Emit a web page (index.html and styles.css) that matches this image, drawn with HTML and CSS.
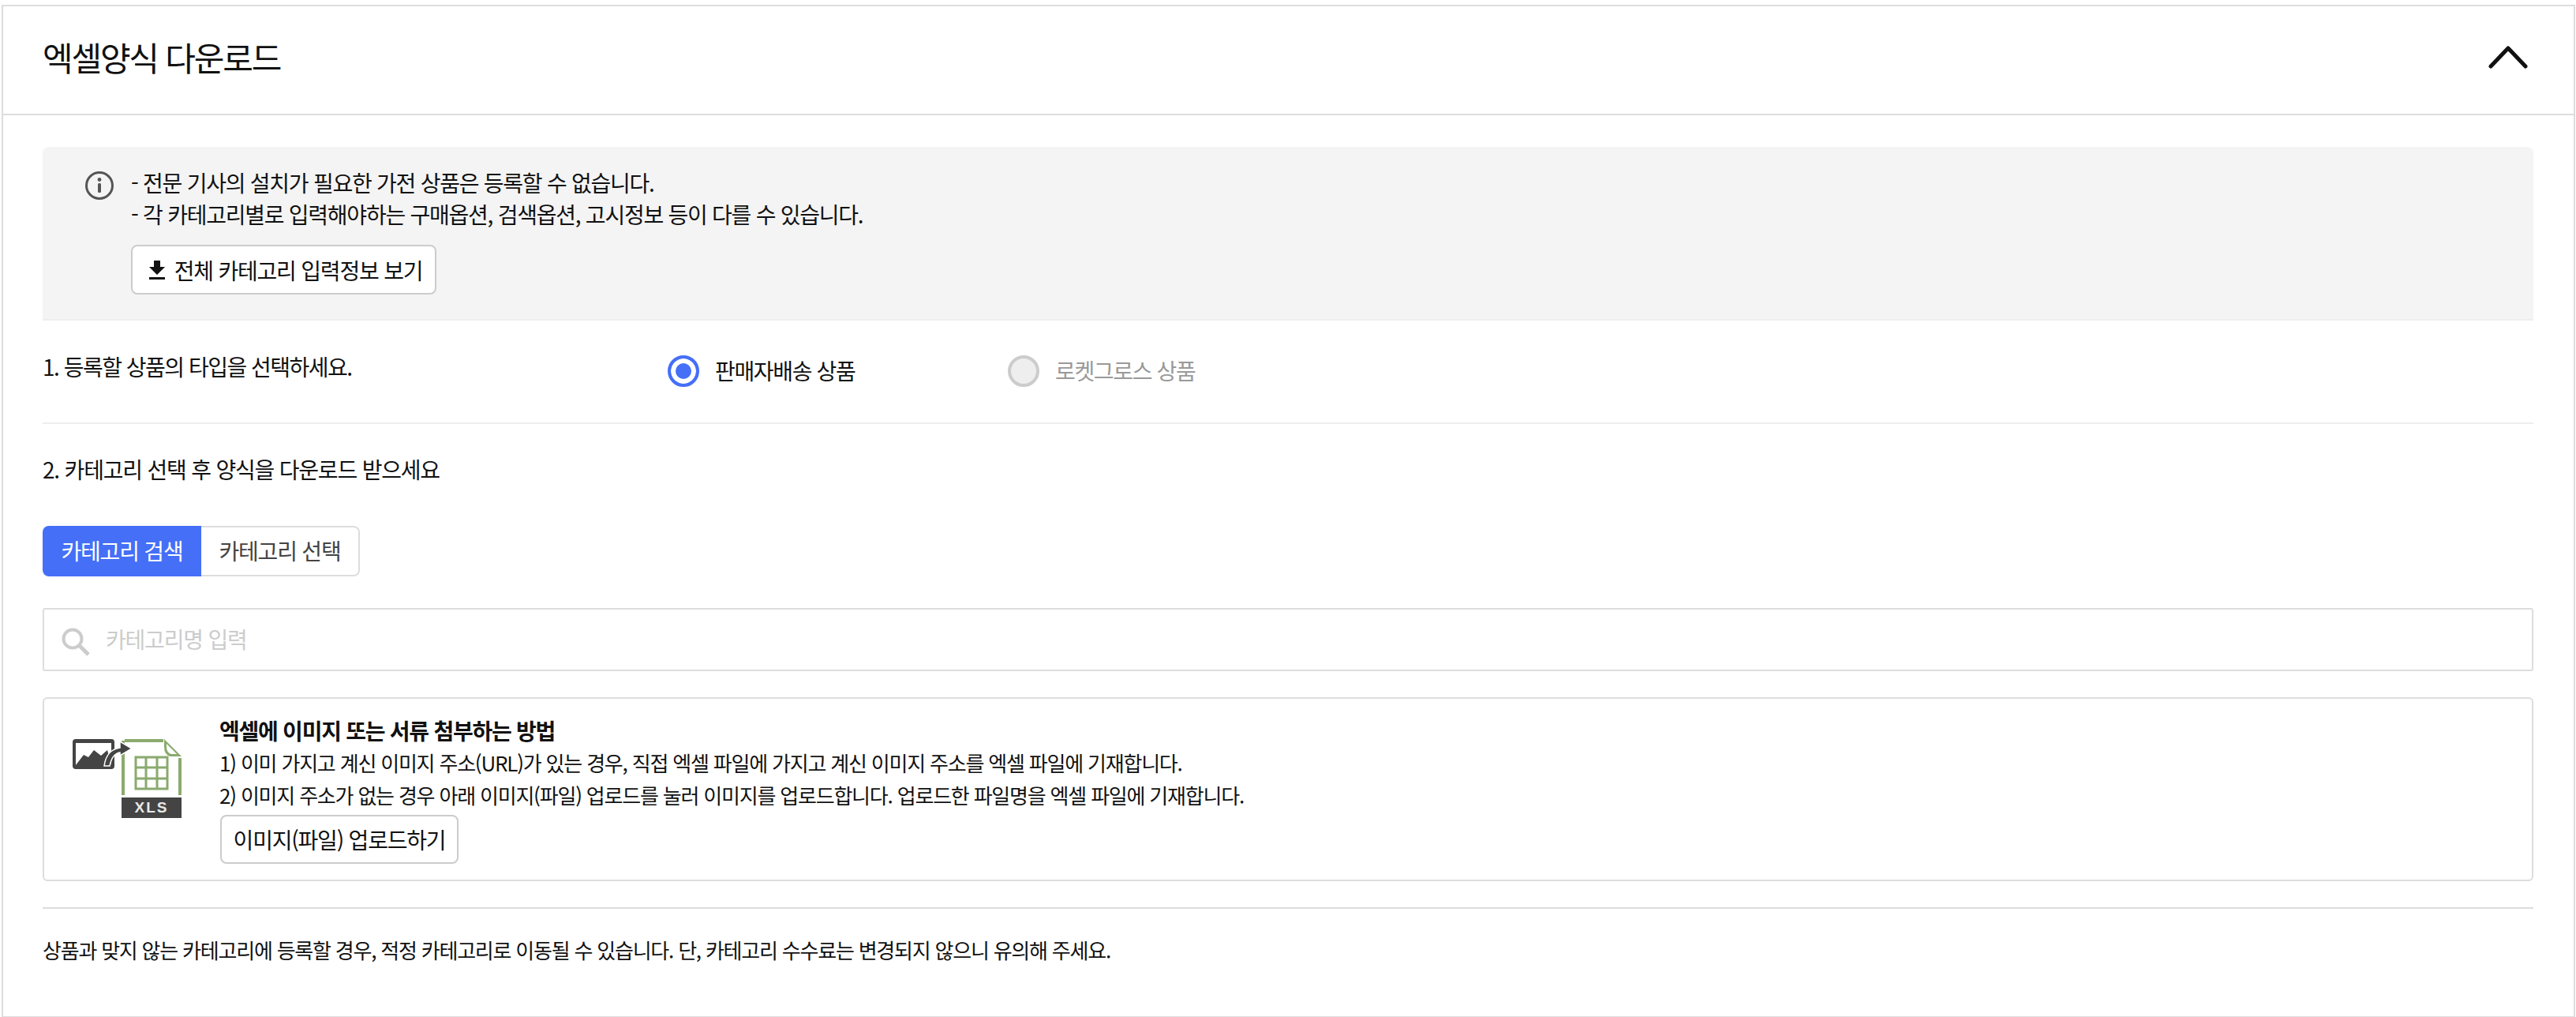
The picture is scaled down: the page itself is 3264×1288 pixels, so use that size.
FILE: index.html
```html
<!DOCTYPE html>
<html lang="ko">
<head>
  <meta charset="UTF-8">
  <title>엑셀양식 다운로드</title>
  <link rel="stylesheet" href="styles.css">
</head>
<body>

  <section class="panel">
    <header class="panel-header">
      <h1>엑셀양식 다운로드</h1>
      <svg class="chevron" width="50" height="30" viewBox="0 0 50 30">
        <path d="M3 27 L25 4 L47 27" fill="none" stroke="#111" stroke-width="5" stroke-linecap="round" stroke-linejoin="round"/>
      </svg>
    </header>

    <div class="panel-body">
      <!-- Notice -->
      <div class="notice">
        <svg class="info-icon" width="36" height="36" viewBox="0 0 36 36">
          <circle cx="18" cy="18" r="16.5" fill="none" stroke="#555" stroke-width="3"/>
          <circle cx="18" cy="10.5" r="2.4" fill="#555"/>
          <rect x="16" y="15" width="4" height="12" rx="1.5" fill="#555"/>
        </svg>
        <div class="notice-text">
          <p>- 전문 기사의 설치가 필요한 가전 상품은 등록할 수 없습니다.</p>
          <p>- 각 카테고리별로 입력해야하는 구매옵션, 검색옵션, 고시정보 등이 다를 수 있습니다.</p>
          <button type="button" class="btn btn-download">
            <svg width="20" height="24" viewBox="0 0 20 24">
              <path d="M6 0 H14 V8 H20 L10 18 L0 8 H6 Z" fill="#111"/>
              <rect x="0" y="21" width="20" height="3" fill="#111"/>
            </svg>
            전체 카테고리 입력정보 보기
          </button>
        </div>
      </div>

      <!-- Step 1 -->
      <div class="type-row">
        <p class="type-label">1. 등록할 상품의 타입을 선택하세요.</p>
        <label class="radio-option">
          <span class="radio radio-on"></span>
          <span class="radio-text">판매자배송 상품</span>
        </label>
        <label class="radio-option radio-option-off">
          <span class="radio radio-off"></span>
          <span class="radio-text">로켓그로스 상품</span>
        </label>
      </div>

      <!-- Step 2 -->
      <p class="step-title">2. 카테고리 선택 후 양식을 다운로드 받으세요</p>

      <div class="tabs">
        <button type="button" class="tab tab-active">카테고리 검색</button>
        <button type="button" class="tab">카테고리 선택</button>
      </div>

      <div class="search-box">
        <svg width="36" height="36" viewBox="0 0 36 36">
          <circle cx="14" cy="14" r="11.5" fill="none" stroke="#ccc" stroke-width="4"/>
          <path d="M23 23 L34 34" stroke="#ccc" stroke-width="5"/>
        </svg>
        <input type="text" placeholder="카테고리명 입력">
      </div>

      <!-- Image guide -->
      <div class="guide">
        <svg class="guide-icon" width="140" height="100" viewBox="0 0 140 100">
          <rect x="0" y="0" width="53" height="38" rx="4" fill="#444"/>
          <rect x="4" y="5" width="45" height="28" fill="#fff"/>
          <path d="M4 33 L14 20 L20 23 L27 14 L36 21 L44 14 L49 33 Z" fill="#444"/>
          <path d="M64 2 V71 M66 2 H115 M136 24 V71" fill="none" stroke="#8aaa6e" stroke-width="4"/>
          <path d="M116 0 L138 22 H124 Q116 20 116 10 Z" fill="#8aaa6e"/>
          <path d="M119 6 L132 19 H125 Q119 17 119 10 Z" fill="#fff"/>
          <g fill="none" stroke="#8aaa6e" stroke-width="3">
            <rect x="80" y="23" width="40" height="40"/>
            <path d="M93 23 V63 M107 23 V63 M80 36 H120 M80 50 H120"/>
          </g>
          <rect x="62" y="74" width="76" height="26" fill="#444"/>
          <text x="100" y="93" class="xls-text" text-anchor="middle">XLS</text>
          <path d="M40 34 C42 20 48 13 60 11 V3 L75 12 L60 21 V17 C53 18 49 24 47 34 Z" fill="#444" stroke="#fff" stroke-width="1.5"/>
        </svg>
        <div class="guide-text">
          <h2>엑셀에 이미지 또는 서류 첨부하는 방법</h2>
          <p>1) 이미 가지고 계신 이미지 주소(URL)가 있는 경우, 직접 엑셀 파일에 가지고 계신 이미지 주소를 엑셀 파일에 기재합니다.</p>
          <p>2) 이미지 주소가 없는 경우 아래 이미지(파일) 업로드를 눌러 이미지를 업로드합니다. 업로드한 파일명을 엑셀 파일에 기재합니다.</p>
          <button type="button" class="btn btn-upload">이미지(파일) 업로드하기</button>
        </div>
      </div>

      <p class="footnote">상품과 맞지 않는 카테고리에 등록할 경우, 적정 카테고리로 이동될 수 있습니다. 단, 카테고리 수수료는 변경되지 않으니 유의해 주세요.</p>
    </div>
  </section>

</body>
</html>
```

FILE: styles.css
```css
/* Basic Styles */
body {
  font-family: "Noto Sans CJK KR", "Noto Sans", sans-serif;
  background-color: #fff;
  color: #111;
  margin: 0;
  padding: 0;
}

p, h1, h2 {
  margin: 0;
}

.panel {
  margin: 6px 1px 0 2px;
  border: 2px solid #ddd;
}

.panel-header {
  height: 136px;
  border-bottom: 2px solid #ddd;
  display: flex;
  align-items: center;
  justify-content: space-between;
  padding: 0 58px 0 50px;
}

.panel-header h1 {
  font-size: 42px;
  font-weight: 400;
  letter-spacing: -2.2px;
  margin-top: -10px;
}

.chevron {
  margin-top: -8px;
}

.panel-body {
  padding: 40px 51px 64px 50px;
}

/* Notice */
.notice {
  background-color: #f4f4f4;
  border-bottom: 2px solid #eee;
  border-radius: 8px 8px 0 0;
  display: flex;
  gap: 22px;
  padding: 25px 0 31px 54px;
}

.info-icon {
  margin-top: 6px;
}

.notice-text p {
  font-size: 28px;
  letter-spacing: -1.25px;
  line-height: 40px;
  white-space: nowrap;
}

.btn {
  background-color: #fff;
  border: 2px solid #ccc;
  border-radius: 8px;
  color: #111;
  font-family: inherit;
  font-size: 28px;
  letter-spacing: -1.2px;
  padding: 0;
}

.btn-download {
  display: flex;
  align-items: center;
  justify-content: center;
  gap: 12px;
  width: 387px;
  height: 63px;
  margin-top: 19px;
  padding-left: 5px;
}

/* Step 1 */
.type-row {
  display: flex;
  padding: 44px 0 45px;
  border-bottom: 2px solid #eee;
}

.type-label {
  width: 792px;
  font-size: 28px;
  letter-spacing: -1.5px;
  line-height: 28px;
}

.radio-option {
  width: 431px;
  display: flex;
  align-items: center;
  gap: 20px;
  font-size: 28px;
  letter-spacing: -1.35px;
  height: 40px;
}

.radio-text {
  margin-top: -3px;
}

.radio-option-off {
  color: #999;
}

.radio {
  width: 40px;
  height: 40px;
  box-sizing: border-box;
  border-radius: 50%;
  border: 4px solid #ccc;
  background-color: #eee;
}

.radio-on {
  border-color: #456ff7;
  background-color: #456ff7;
  box-shadow: inset 0 0 0 6px #fff;
}

/* Step 2 */
.step-title {
  font-size: 28px;
  letter-spacing: -1.2px;
  line-height: 40px;
  margin-top: 37px;
}

.tabs {
  display: flex;
  margin-top: 52px;
}

.tab {
  width: 201px;
  height: 64px;
  background-color: #fff;
  border: 2px solid #ddd;
  border-left: 0;
  border-radius: 0 8px 8px 0;
  color: #444;
  font-family: inherit;
  font-size: 28px;
  letter-spacing: -1.2px;
  padding: 0 0 3px;
}

.tab-active {
  background-color: #456ff7;
  border: 0;
  border-radius: 8px 0 0 8px;
  color: #fff;
}

.search-box {
  height: 80px;
  box-sizing: border-box;
  margin-top: 40px;
  border: 2px solid #ddd;
  border-radius: 3px;
  display: flex;
  align-items: center;
  gap: 20px;
  padding: 6px 0 0 22px;
}

.search-box input {
  flex: 1;
  border: 0;
  outline: 0;
  font-family: inherit;
  font-size: 28px;
  letter-spacing: -1.2px;
  padding: 0;
  margin-top: -8px;
}

.search-box input::placeholder {
  color: #ccc;
}

/* Image guide */
.guide {
  margin-top: 33px;
  height: 233px;
  box-sizing: border-box;
  border: 2px solid #ddd;
  border-radius: 6px;
  display: flex;
  padding: 20px 0 0 36px;
}

.guide-icon {
  margin: 31px 46px 0 0;
}

.xls-text {
  fill: #e8e8e8;
  font-family: "Liberation Sans", sans-serif;
  font-size: 19px;
  font-weight: 700;
  letter-spacing: 2px;
}

.guide-text h2 {
  font-size: 28px;
  font-weight: 700;
  letter-spacing: -1.25px;
  line-height: 40px;
}

.guide-text p {
  font-size: 26px;
  letter-spacing: -1.2px;
  line-height: 41px;
  white-space: nowrap;
}

.btn-upload {
  width: 302px;
  height: 62px;
  margin-top: 5px;
  margin-left: 1px;
}

.footnote {
  margin-top: 33px;
  padding-top: 32px;
  border-top: 2px solid #ddd;
  font-size: 26px;
  letter-spacing: -1.22px;
  line-height: 40px;
}
```
